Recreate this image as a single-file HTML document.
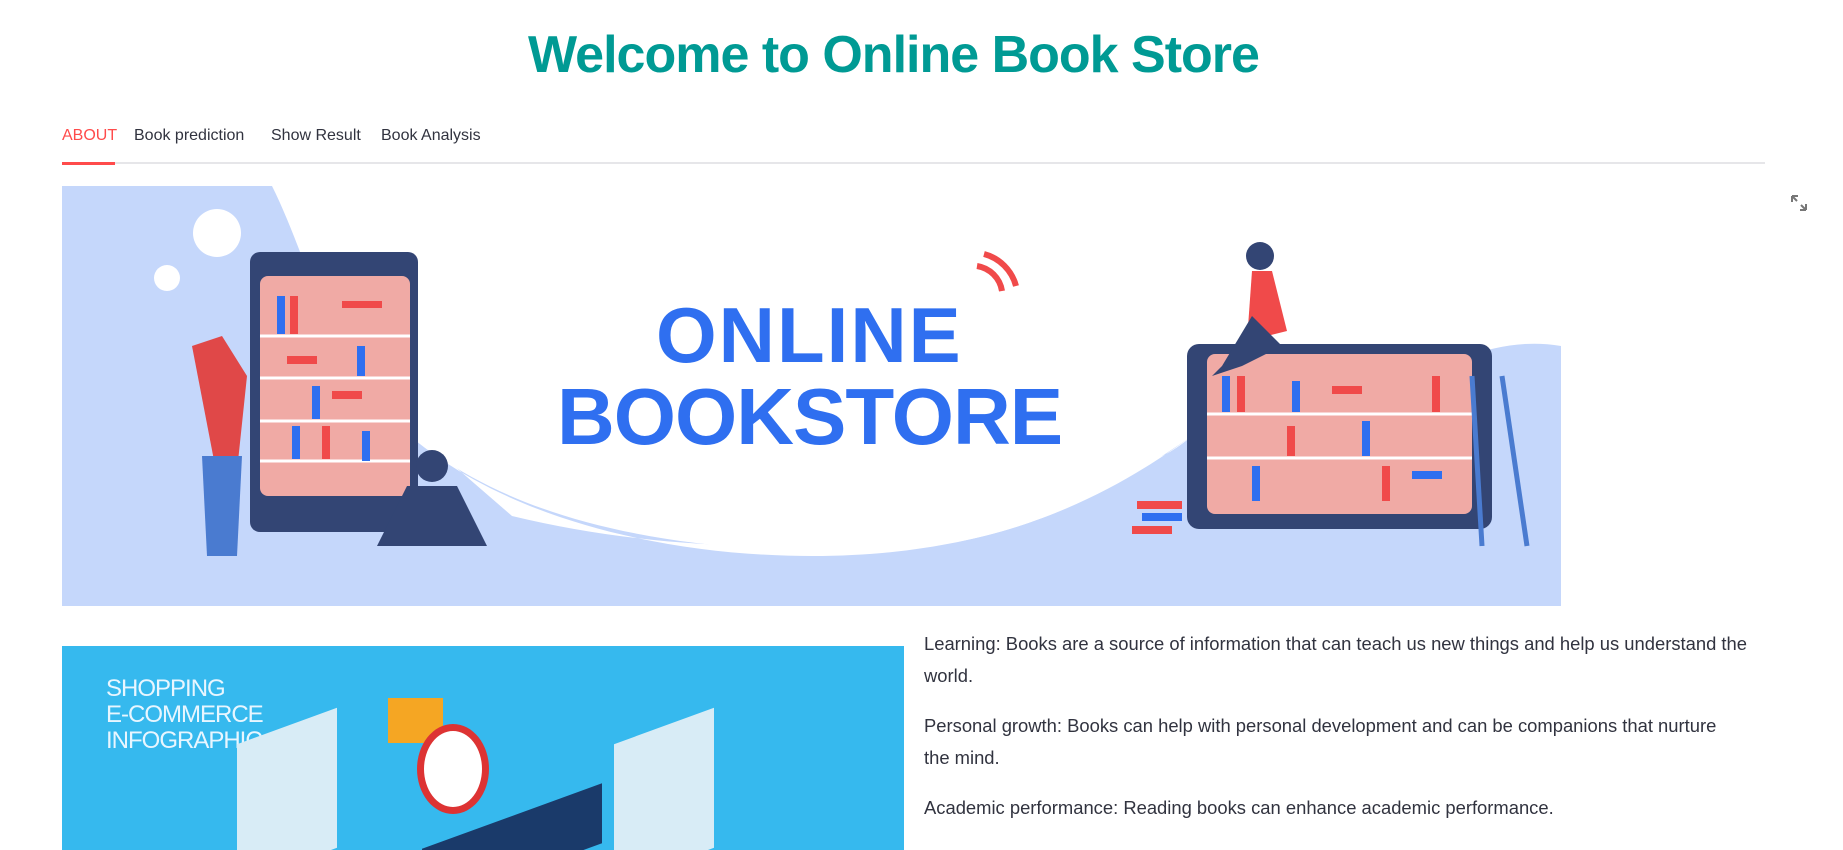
<!DOCTYPE html>
<html><head><meta charset="utf-8"><style>
*{margin:0;padding:0;box-sizing:border-box}
html,body{width:1843px;height:850px;overflow:hidden}
body{background:#fff;font-family:"Liberation Sans",sans-serif;color:#31333f;position:relative}
h1{position:absolute;top:25px;left:-28px;width:1843px;text-align:center;color:#009a94;font-size:52px;font-weight:bold;letter-spacing:-1px}
.tabs{position:absolute;top:127px;left:62px;font-size:16px}
.tabs span{position:absolute;white-space:nowrap}
.line{position:absolute;top:162px;left:62px;width:1703px;height:2px;background:#e6e6e9}
.act{position:absolute;top:162px;left:62px;width:53px;height:3px;background:#ff4b4b}
.banner{position:absolute;left:62px;top:186px;width:1499px;height:420px}
.left{position:absolute;left:62px;top:646px;width:842px;height:204px;background:#36b9ee;overflow:hidden}
.txt{position:absolute;left:924px;top:628px;width:900px;font-size:18.4px;line-height:32px;white-space:nowrap}
.txt p{margin-bottom:18px}
</style></head><body>
<h1>Welcome to Online Book Store</h1>
<div class="tabs">
<span style="left:0;color:#ff4b4b">ABOUT</span>
<span style="left:72px">Book prediction</span>
<span style="left:209px">Show Result</span>
<span style="left:319px">Book Analysis</span>
</div>
<div class="line"></div><div class="act"></div>
<svg style="position:absolute;left:1789px;top:193px" width="20" height="20" viewBox="0 0 20 20"><path d="M3 3h6M3 3v6M3 3l5 5M17 17h-6M17 17v-6M17 17l-5-5" stroke="#777" stroke-width="2" fill="none"/></svg>
<svg class="banner" viewBox="0 0 1499 420">
<rect width="1499" height="420" fill="#c5d7fb"/>
<path d="M210 0 L1499 0 L1499 160 C1380 140 1300 260 1130 250 C1000 340 900 370 750 365 C520 360 380 300 300 200 C260 140 240 60 210 0Z" fill="#fff"/>
<path d="M300 200 C400 330 600 370 750 370 C950 370 1060 300 1130 250 C1070 300 1060 260 1040 270 L1040 300 C950 350 700 390 450 330 Z" fill="#fff"/>
<circle cx="155" cy="47" r="24" fill="#fff"/><circle cx="105" cy="92" r="13" fill="#fff"/>
<rect x="188" y="66" width="168" height="280" rx="10" fill="#334574"/>
<rect x="198" y="90" width="150" height="220" rx="8" fill="#f0aaa5"/>
<g stroke="#fff" stroke-width="3"><line x1="198" y1="150" x2="348" y2="150"/><line x1="198" y1="192" x2="348" y2="192"/><line x1="198" y1="235" x2="348" y2="235"/><line x1="198" y1="275" x2="348" y2="275"/></g>
<g fill="#2f6ff0"><rect x="215" y="110" width="8" height="38"/><rect x="250" y="200" width="8" height="33"/><rect x="295" y="160" width="8" height="30"/><rect x="230" y="240" width="8" height="33"/><rect x="300" y="245" width="8" height="30"/></g>
<g fill="#f04a4a"><rect x="228" y="110" width="8" height="38"/><rect x="280" y="115" width="40" height="7"/><rect x="225" y="170" width="30" height="8"/><rect x="270" y="205" width="30" height="8"/><rect x="260" y="240" width="8" height="33"/></g>
<path d="M130 160 l30 -10 l25 40 l-10 95 l-20 5 z" fill="#e04848"/><path d="M140 270 l40 0 l-5 100 l-30 0 z" fill="#4a7bd0"/>
<path d="M345 300 l50 0 l30 60 l-110 0z" fill="#334574"/><circle cx="370" cy="280" r="16" fill="#334574"/>
<text x="594" y="176" font-family="Liberation Sans" font-weight="bold" font-size="78" fill="#2f6ff0" letter-spacing="2">ONLINE</text>
<text x="495" y="258" font-family="Liberation Sans" font-weight="bold" font-size="80" fill="#2f6ff0" letter-spacing="-1">BOOKSTORE</text>
<path d="M915 80 a30 30 0 0 1 25 25 M922 68 a45 45 0 0 1 32 32" stroke="#f04a4a" stroke-width="6" fill="none"/>
<rect x="1125" y="158" width="305" height="185" rx="12" fill="#334574"/>
<rect x="1145" y="168" width="265" height="160" rx="8" fill="#f0aaa5"/>
<g stroke="#fff" stroke-width="3"><line x1="1145" y1="228" x2="1410" y2="228"/><line x1="1145" y1="272" x2="1410" y2="272"/></g>
<g fill="#2f6ff0"><rect x="1160" y="190" width="8" height="36"/><rect x="1230" y="195" width="8" height="31"/><rect x="1300" y="235" width="8" height="35"/><rect x="1190" y="280" width="8" height="35"/><rect x="1350" y="285" width="30" height="8"/></g>
<g fill="#f04a4a"><rect x="1175" y="190" width="8" height="36"/><rect x="1270" y="200" width="30" height="8"/><rect x="1225" y="240" width="8" height="30"/><rect x="1320" y="280" width="8" height="35"/><rect x="1370" y="190" width="8" height="36"/></g>
<path d="M1410 190 l10 170 M1440 190 l25 170" stroke="#4a7bd0" stroke-width="5"/>
<path d="M1190 85 l20 0 l15 60 l-40 10z" fill="#f04a4a"/><circle cx="1198" cy="70" r="14" fill="#334574"/><path d="M1190 130 l-30 50 l-10 10 l30 -10 l40 -20z" fill="#334574"/>
<g fill="#f04a4a"><rect x="1075" y="315" width="45" height="8"/><rect x="1070" y="340" width="40" height="8"/></g><g fill="#2f6ff0"><rect x="1080" y="327" width="40" height="8"/></g>
</svg>
<div class="left">
<div style="position:absolute;left:44px;top:30px;color:#e8f6ff;font-size:24px;line-height:26px;letter-spacing:-1px">SHOPPING<br>E-COMMERCE<br>INFOGRAPHIC</div>
<div style="position:absolute;left:326px;top:52px;width:55px;height:45px;background:#f5a623"></div>
<div style="position:absolute;left:355px;top:78px;width:72px;height:90px;border-radius:50%;border:7px solid #d33;background:#fff"></div>
<div style="position:absolute;left:175px;top:80px;width:100px;height:140px;background:#d8ecf6;transform:skewY(-20deg)"></div>
<div style="position:absolute;left:552px;top:80px;width:100px;height:140px;background:#d8ecf6;transform:skewY(-20deg)"></div>
<div style="position:absolute;left:360px;top:170px;width:180px;height:60px;background:#1a3a6a;transform:skewY(-20deg)"></div>
</div>
<div class="txt">
<p>Learning: Books are a source of information that can teach us new things and help us understand the<br>world.</p>
<p>Personal growth: Books can help with personal development and can be companions that nurture<br>the mind.</p>
<p>Academic performance: Reading books can enhance academic performance.</p>
</div>
</body></html>
